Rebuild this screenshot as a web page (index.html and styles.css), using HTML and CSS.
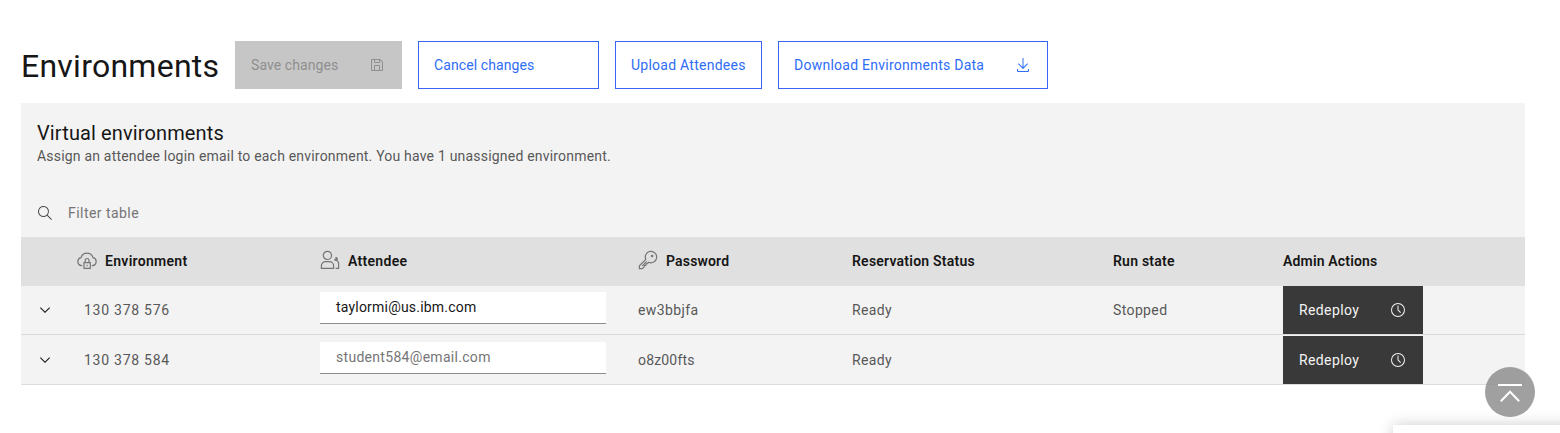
FILE: index.html
```html
<!DOCTYPE html>
<html lang="en">
<head>
<meta charset="utf-8">
<title>Environments</title>
<link rel="stylesheet" href="styles.css">
</head>
<body>
<svg class="defs" aria-hidden="true">
  <symbol id="chevron" viewBox="0 0 16 16"><path d="M8 11L3 6 3.7 5.3 8 9.6 12.3 5.3 13 6z"/></symbol>
  <symbol id="time" viewBox="0 0 32 32"><path d="M16,30A14,14,0,1,1,30,16,14,14,0,0,1,16,30ZM16,4A12,12,0,1,0,28,16,12,12,0,0,0,16,4Z"/><path d="M20.59 22 15 16.41 15 7 17 7 17 15.58 22 20.59z"/></symbol>
</svg>
<main class="page">
  <header class="page-header">
    <h1 class="title">Environments</h1>
    <div class="actions">
      <button class="btn btn-disabled btn-save" disabled><span class="ls-save">Save changes</span>
        <svg class="icon" viewBox="0 0 32 32"><path d="M27.71,9.29l-5-5A1,1,0,0,0,22,4H6A2,2,0,0,0,4,6V26a2,2,0,0,0,2,2H26a2,2,0,0,0,2-2V10A1,1,0,0,0,27.71,9.29ZM12,6h8v4H12Zm8,20H12V18h8Zm2,0V18a2,2,0,0,0-2-2H12a2,2,0,0,0-2,2v8H6V6h4v4a2,2,0,0,0,2,2h8a2,2,0,0,0,2-2V6.41l4,4V26Z"/></svg>
      </button>
      <button class="btn btn-outline btn-cancel"><span class="ls-cancel">Cancel changes</span></button>
      <button class="btn btn-outline btn-upload"><span class="ls-upload">Upload Attendees</span></button>
      <button class="btn btn-outline btn-download"><span class="ls-upload">Download Environments Data</span>
        <svg class="icon" viewBox="0 0 32 32"><path d="M26 24v4H6V24H4v4a2 2 0 002 2H26a2 2 0 002-2V24zM26 14L24.59 12.59 17 20.17 17 2 15 2 15 20.17 7.41 12.59 6 14 16 24 26 14z"/></svg>
      </button>
    </div>
  </header>

  <section class="panel">
    <div class="panel-head">
      <h2 class="panel-title">Virtual environments</h2>
      <p class="panel-text">Assign an attendee login email to each environment. You have 1 unassigned environment.</p>
    </div>
    <div class="toolbar">
      <svg class="icon" viewBox="0 0 16 16"><path d="M15,14.3L10.7,10c1.9-2.3,1.6-5.8-0.7-7.7S4.2,0.7,2.3,3S0.7,8.8,3,10.7c2,1.7,5,1.7,7,0l4.3,4.3L15,14.3z M2,6.5C2,4,4,2,6.5,2S11,4,11,6.5S9,11,6.5,11S2,9,2,6.5z"/></svg>
      <span>Filter table</span>
    </div>

    <div class="row row-head">
      <div></div>
      <div class="th">
        <svg class="picto" viewBox="0 0 20 20"><path d="M5.2 15.6H4.6A4 4 0 0 1 4 7.7 6.2 6.2 0 0 1 16 7.7a4 4 0 0 1-.6 7.9h-.6M7 12.6h6.3v5.8H7zM8.2 12.4v-2a1.9 1.9 0 0 1 3.8 0v2M10.1 14.8v1.4"/></svg>
        <span class="ls-env">Environment</span>
      </div>
      <div class="th">
        <svg class="picto" viewBox="0 0 20 20"><circle cx="7.4" cy="5.4" r="4.1"/><path d="M1.4 18.3v-2.5a4.1 4.1 0 0 1 4.1-4.1h4a4.1 4.1 0 0 1 4.1 4.1v2.5zM15.6 18.3h3v-4.5a4 4 0 0 0-2.7-3.8M14.5 9.2a1.4 1.4 0 1 0 1.5-1.6v2.6"/></svg>
        <span class="ls-env">Attendee</span>
      </div>
      <div class="th">
        <svg class="picto" viewBox="0 0 20 20"><path d="M7.8 9.4A5.7 5.7 0 1 1 10.7 12.3L9.3 13.7 8.1 13.8 7.9 15.2 6.4 15.6 6.1 17 4.4 18.6H1.4V15.8z"/><circle cx="14.1" cy="6" r=".7"/><path d="M4.3 15.8 8.8 11.3"/></svg>
        <span class="ls-pass">Password</span>
      </div>
      <div class="th ls-status">Reservation Status</div>
      <div class="th ls-status">Run state</div>
      <div class="th ls-pass">Admin Actions</div>
    </div>

    <div class="row">
      <div class="expand"><svg class="icon" viewBox="0 0 16 16"><use href="#chevron"/></svg></div>
      <div class="env-id">130 378 576</div>
      <div class="field"><span class="input ls-mail">taylormi@us.ibm.com</span></div>
      <div class="ls-cell">ew3bbjfa</div>
      <div class="ls-cell">Ready</div>
      <div class="ls-cell">Stopped</div>
      <div class="action"><button class="btn btn-dark"><span class="ls-cell">Redeploy</span><svg class="icon" viewBox="0 0 32 32"><use href="#time"/></svg></button></div>
    </div>
    <div class="row row-last">
      <div class="expand"><svg class="icon" viewBox="0 0 16 16"><use href="#chevron"/></svg></div>
      <div class="env-id">130 378 584</div>
      <div class="field"><span class="input placeholder">student584@email.com</span></div>
      <div class="ls-pass">o8z00fts</div>
      <div class="ls-cell">Ready</div>
      <div></div>
      <div class="action"><button class="btn btn-dark"><span class="ls-cell">Redeploy</span><svg class="icon" viewBox="0 0 32 32"><use href="#time"/></svg></button></div>
    </div>
  </section>
</main>
<div class="popup"></div>
<button class="to-top" aria-label="Back to top">
  <svg viewBox="0 0 50 50"><path d="M13 18h24M15.8 34.2l9.2-9.4 9.2 9.4"/></svg>
</button>
</body>
</html>
```
FILE: styles.css
```css
* { box-sizing: border-box; }
body {
  margin: 0;
  height: 433px;
  overflow: hidden;
  background: #fff;
  color: #161616;
  font: 14px/18px Roboto, "Liberation Sans", sans-serif;
}
h1, h2, p { margin: 0; font-weight: 400; }
.defs { display: none; }
.page { padding: 41px 35px 0 21px; }

.page-header { display: flex; height: 48px; margin-bottom: 14px; }
.title {
  width: 214px;
  padding-top: 5px;
  font-size: 32px;
  line-height: 40px;
  letter-spacing: .25px;
  white-space: nowrap;
}
.actions { display: flex; gap: 16px; }

.btn {
  display: flex;
  align-items: center;
  justify-content: space-between;
  height: 48px;
  padding: 0 16px;
  border: 0;
  border-radius: 0;
  font: inherit;
  white-space: nowrap;
}
.icon { width: 16px; height: 16px; fill: currentColor; flex: none; }
.btn-disabled { background: #c6c6c6; color: #8f8f8f; }
.btn-outline { padding: 0 15px; border: 1px solid #3c64f4; background: #fff; color: #2f6df6; }
.btn-save { width: 167px; padding-right: 17px; }
.btn-cancel { width: 181px; }
.btn-upload { width: 147px; }
.btn-download { width: 270px; }
.btn-download .icon { margin-right: 1px; }
.btn-dark { width: 140px; padding-right: 17px; background: #393939; color: #f4f4f4; }

.panel { background: #f3f3f3; color: #585858; }
.panel-head { height: 86px; padding: 17px 16px 0; }
.panel-title { color: #161616; font-size: 20px; line-height: 26px; letter-spacing: .12px; }
.panel-text { padding-top: 1px; letter-spacing: .2px; }
.toolbar {
  display: flex;
  align-items: center;
  gap: 15px;
  height: 48px;
  padding: 0 16px;
  color: #757575;
  letter-spacing: .45px;
}
.toolbar .icon { color: #4a4a4a; }

.row {
  display: grid;
  grid-template-columns: 56px 243px 318px 214px 261px 170px 242px;
  align-items: center;
  height: 49px;
  border-bottom: 1px solid #dcdcdc;
}
.row-last { height: 50px; padding-top: 1px; }
.row-head { padding-bottom: 1px; border: 0; background: #e0e0e0; color: #161616; font-weight: 600; }
.th { display: flex; align-items: center; gap: 8px; }
.picto {
  width: 20px;
  height: 20px;
  margin-top: -2px;
  fill: none;
  stroke: #757575;
  stroke-width: 1.2;
}
.expand { padding-left: 16px; color: #161616; }
.expand .icon { display: block; }
.env-id { padding-left: 7px; letter-spacing: .74px; }
.field { align-self: start; padding-top: 6px; }
.input {
  display: block;
  width: 286px;
  height: 32px;
  padding-left: 16px;
  border-bottom: 1px solid #8d8d8d;
  background: #fff;
  color: #161616;
  line-height: 31px;
}
.input.placeholder { color: #757575; letter-spacing: .3px; }

.ls-save { letter-spacing: .08px; }
.ls-cancel { letter-spacing: .1px; }
.ls-upload { letter-spacing: .25px; }
.ls-env { letter-spacing: .3px; }
.ls-pass { letter-spacing: .17px; }
.ls-status { letter-spacing: .23px; }
.ls-mail { letter-spacing: .2px; }
.ls-cell { letter-spacing: .38px; }

.to-top {
  position: absolute;
  left: 1485px;
  top: 367px;
  width: 50px;
  height: 50px;
  padding: 0;
  border: 0;
  border-radius: 50%;
  background: rgba(141, 141, 141, .83);
}
.to-top svg { display: block; fill: none; stroke: #fff; stroke-width: 2; }
.popup {
  position: absolute;
  left: 1393px;
  top: 425px;
  width: 220px;
  height: 60px;
  background: #fff;
  box-shadow: 0 0 14px rgba(0, 0, 0, .2);
}
```
